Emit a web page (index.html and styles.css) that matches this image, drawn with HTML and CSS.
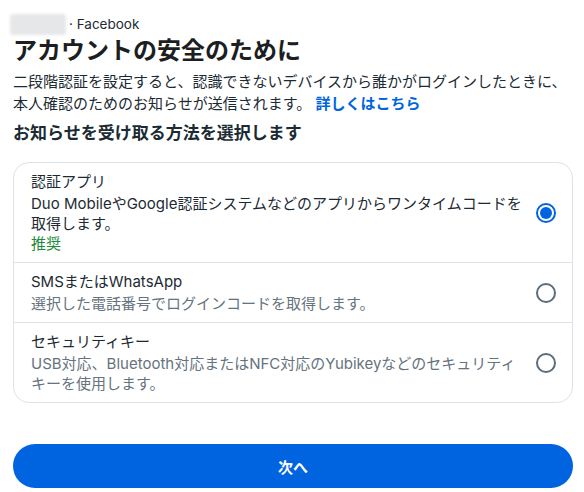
FILE: index.html
```html
<!DOCTYPE html>
<html lang="ja">
<head>
<meta charset="utf-8">
<link rel="stylesheet" href="styles.css">
</head>
<body>
<main class="page">
  <div class="meta"><span class="blur-name"></span><span class="meta-text">· Facebook</span></div>
  <h1 class="title">アカウントの安全のために</h1>
  <p class="intro">二段階認証を設定すると、認識できないデバイスから誰かがログインしたときに、本人確認のためのお知らせが送信されます。 <a class="link" href="#">詳しくはこちら</a></p>
  <h2 class="heading">お知らせを受け取る方法を選択します</h2>
  <div class="card">
    <div class="row selected">
      <div class="row-text">
        <div class="row-title">認証アプリ</div>
        <div class="row-desc">Duo MobileやGoogle認証システムなどのアプリからワンタイムコードを取得します。</div>
        <div class="row-tag">推奨</div>
      </div>
      <span class="radio radio-on"><span class="dot"></span></span>
    </div>
    <div class="row">
      <div class="row-text">
        <div class="row-title">SMSまたはWhatsApp</div>
        <div class="row-desc muted">選択した電話番号でログインコードを取得します。</div>
      </div>
      <span class="radio"></span>
    </div>
    <div class="row">
      <div class="row-text">
        <div class="row-title">セキュリティキー</div>
        <div class="row-desc muted">USB対応、Bluetooth対応またはNFC対応のYubikeyなどのセキュリティキーを使用します。</div>
      </div>
      <span class="radio"></span>
    </div>
  </div>
  <button class="next">次へ</button>
</main>
</body>
</html>
```
FILE: styles.css
```css
* { box-sizing: border-box; }
html, body { margin: 0; padding: 0; background: #fff; }
body {
  font-family: Inter, "Noto Sans CJK JP", sans-serif;
  color: #1c2b33;
}
.page {
  padding: 12px 11px 0 13px;
  display: flex;
  flex-direction: column;
}
.meta {
  height: 24px;
  display: flex;
  align-items: center;
  font-size: 13.5px;
  line-height: 24px;
}
.blur-name {
  display: inline-block;
  width: 56px;
  height: 21px;
  margin-left: -3px;
  margin-right: 3px;
  background: #e6e7e9;
  filter: blur(1.5px);
  border-radius: 3px;
}
.meta-text { color: #1c2b33; }
.title {
  margin: 0;
  font-size: 24px;
  line-height: 30px;
  font-weight: 700;
  color: #1c1e21;
}
.intro {
  margin: 5px 0 0;
  font-size: 15px;
  line-height: 22px;
}
.link {
  color: #0064e0;
  font-weight: 700;
  text-decoration: none;
}
.heading {
  margin: 6px 0 0;
  font-size: 17px;
  line-height: 24px;
  font-weight: 700;
}
.card {
  margin-top: 17px;
  border: 1px solid #dee3e9;
  border-radius: 16px;
  overflow: hidden;
}
.row {
  display: flex;
  align-items: center;
  gap: 12px;
  padding: 9px 16px 8px 17px;
}
.row + .row { border-top: 1px solid #dee3e9; }
.row-text { flex: 1; min-width: 0; }
.row-title {
  font-size: 15px;
  line-height: 20px;
  margin-bottom: 2px;
}
.row-desc {
  font-size: 15px;
  line-height: 20px;
}
.muted { color: #65737e; }
.row-tag {
  font-size: 15px;
  line-height: 20px;
  color: #1f8a3c;
}
.radio {
  flex: none;
  width: 20px;
  height: 20px;
  border: 2px solid #5d6c7b;
  border-radius: 50%;
  display: flex;
  align-items: center;
  justify-content: center;
}
.radio-on { border-color: #0064e0; }
.dot {
  width: 12px;
  height: 12px;
  border-radius: 50%;
  background: #0064e0;
}
.next {
  margin-top: 41px;
  height: 44px;
  border: 0;
  border-radius: 22px;
  background: #0064e0;
  color: #fff;
  font-family: Inter, "Noto Sans CJK JP", sans-serif;
  font-size: 15px;
  font-weight: 600;
  width: 100%;
}
```
